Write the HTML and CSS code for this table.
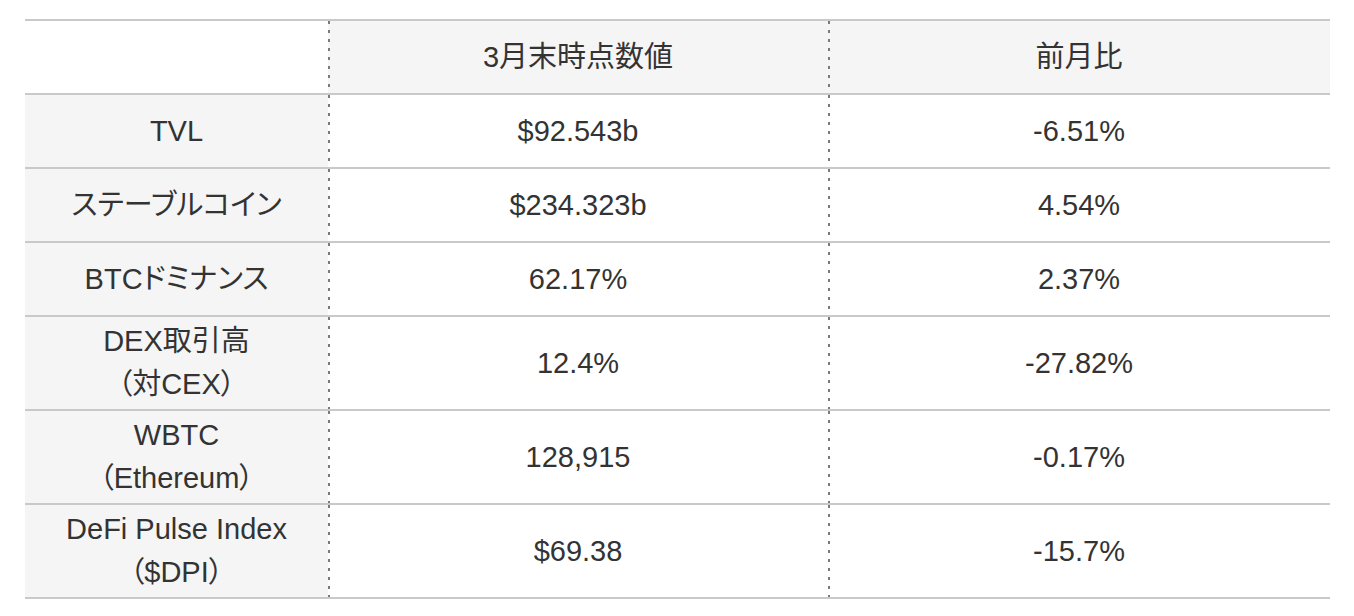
FILE: index.html
```html
<!DOCTYPE html>
<html lang="ja">
<head>
<meta charset="utf-8">
<title>DeFi 指標</title>
<link rel="stylesheet" href="styles.css">
</head>
<body>
<div class="wrap">
  <table class="data">
    <colgroup>
      <col class="c1">
      <col class="c2">
      <col class="c3">
    </colgroup>
    <thead>
      <tr>
        <th class="corner"></th>
        <th class="head dot">3月末時点数値</th>
        <th class="head dot">前月比</th>
      </tr>
    </thead>
    <tbody>
      <tr>
        <th class="label">TVL</th>
        <td class="dot">$92.543b</td>
        <td class="dot">-6.51%</td>
      </tr>
      <tr>
        <th class="label">ステーブルコイン</th>
        <td class="dot">$234.323b</td>
        <td class="dot">4.54%</td>
      </tr>
      <tr>
        <th class="label">BTCドミナンス</th>
        <td class="dot">62.17%</td>
        <td class="dot">2.37%</td>
      </tr>
      <tr>
        <th class="label">DEX取引高<br>（対CEX）</th>
        <td class="dot">12.4%</td>
        <td class="dot">-27.82%</td>
      </tr>
      <tr>
        <th class="label">WBTC<br>（Ethereum）</th>
        <td class="dot">128,915</td>
        <td class="dot">-0.17%</td>
      </tr>
      <tr>
        <th class="label">DeFi Pulse Index<br>（$DPI）</th>
        <td class="dot">$69.38</td>
        <td class="dot">-15.7%</td>
      </tr>
    </tbody>
  </table>
</div>
</body>
</html>
```

FILE: styles.css
```css
html, body {
  margin: 0;
  padding: 0;
  background: #ffffff;
}

body {
  font-family: "Liberation Sans", "Noto Sans CJK JP", sans-serif;
  color: #333333;
  font-feature-settings: "palt";
}

.wrap {
  padding: 19px 24px 0 25px;
}

.data {
  width: 1305px;
  border-collapse: collapse;
  table-layout: fixed;
}

.c1 { width: 303px; }
.c2 { width: 500px; }
.c3 { width: 502px; }

.data th,
.data td {
  font-size: 29px;
  font-weight: 400;
  line-height: 43px;
  text-align: center;
  vertical-align: middle;
  padding: 3px 8px;
  border-top: 2px solid #c9c9c9;
  border-bottom: 2px solid #c9c9c9;
}

.data tr {
  height: 74px;
}

.corner {
  background-color: #ffffff;
}

.head {
  background-color: #f5f5f5;
}

.label {
  background-color: #f5f5f5;
}

.dot {
  background-image: linear-gradient(to bottom, #7a7a7a 0, #7a7a7a 3px, transparent 3px);
  background-size: 2px 9px;
  background-repeat: repeat-y;
  background-position: left top;
}
```
